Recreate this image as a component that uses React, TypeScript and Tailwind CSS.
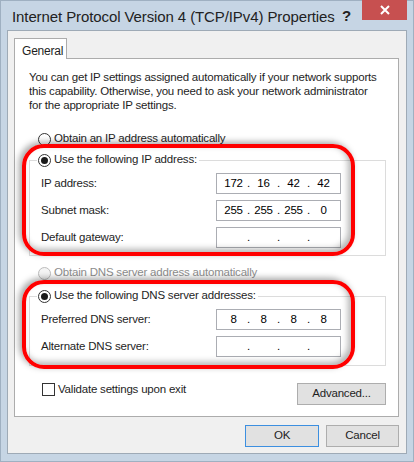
import React from 'react';

const font = "font-['Liberation_Sans',Arial,sans-serif]";

function Radio({ checked, disabled }: { checked?: boolean; disabled?: boolean }) {
  return (
    <span
      className={`w-[13px] h-[13px] rounded-full border flex items-center justify-center shrink-0 ${
        disabled ? 'border-[#bcbcbc] bg-[#f4f4f4]' : 'border-[#333333] bg-white'
      }`}
    >
      {checked && <span className="w-[7px] h-[7px] rounded-full bg-[#1a1a1a]" />}
    </span>
  );
}

function IpField({ octets }: { octets: string[] }) {
  return (
    <div className="w-[125px] h-[21px] border border-[#abadb3] bg-white flex items-center pl-[3px] text-black">
      {octets.map((o, i) => (
        <React.Fragment key={i}>
          <span className="w-[27px] text-center">{o}</span>
          {i < 3 && <span className="w-[3px] text-center">.</span>}
        </React.Fragment>
      ))}
    </div>
  );
}

function FieldRow({ label, octets }: { label: string; octets: string[] }) {
  return (
    <div className="flex items-center h-[21px]">
      <span className="w-[175px]">{label}</span>
      <IpField octets={octets} />
    </div>
  );
}

function Button({ children, primary }: { children: React.ReactNode; primary?: boolean }) {
  return (
    <div
      className={`h-[22px] flex items-center justify-center bg-[#e1e1e1] border ${
        primary ? 'border-[#3c8fe0] w-[74px]' : 'border-[#adadad] w-[73px]'
      }`}
    >
      {children}
    </div>
  );
}

export default function App() {
  return (
    <div className={`w-[414px] h-[462px] bg-[#c6d5e4] border border-[#9fb0c1] flex flex-col text-[11.5px] tracking-[-0.2px] text-[#1e1e1e] ${font}`}>
      {/* Title bar */}
      <div className="h-[29px] flex items-start">
        <div className="pl-[11px] pt-[5px] text-[15px] tracking-[-0.1px] text-[#222] whitespace-nowrap">
          Internet Protocol Version 4 (TCP/IPv4) Properties
        </div>
        <div className="ml-auto flex items-start">
          <div className="pt-[4px] pr-[11px] text-[15px] font-bold text-[#222]">?</div>
          <div className="w-[45px] h-[20px] bg-[#c75050] flex items-center justify-center mr-[6px] -mt-px">
            <svg width="10" height="10" viewBox="0 0 10 10">
              <path d="M1 1L9 9M9 1L1 9" stroke="white" strokeWidth="2" />
            </svg>
          </div>
        </div>
      </div>

      {/* Client area */}
      <div className="ml-[6px] w-[400px] h-[424px] border border-[#9eaab6] bg-[#f0f0f0] pl-[6px] pt-[7px]">
        {/* Tab */}
        <div className="relative z-10 -mb-px w-[53px] h-[21px] border border-b-0 border-[#acacac] bg-white pl-[7px] pt-[3px] text-[12px]">
          General
        </div>

        {/* Tab panel */}
        <div className="relative w-[385px] h-[359px] border border-[#acacac] bg-white px-[14px] pt-[11px]">
          <p className="leading-[14px] whitespace-nowrap">
            You can get IP settings assigned automatically if your network supports
            <br />
            this capability. Otherwise, you need to ask your network administrator
            <br />
            for the appropriate IP settings.
          </p>

          <div className="mt-[19px] h-[16px] flex items-center gap-[3px] pl-[9px]">
            <Radio />
            <span>Obtain an IP address automatically</span>
          </div>

          <fieldset className="mt-[6px] w-[357px] border border-[#dcdcdc] pt-[6px] pb-[7px]">
            <legend className="ml-[7px] h-[14px] flex items-center gap-[3px] pr-[2px] pl-[1px]">
              <Radio checked />
              <span>Use the following IP address:</span>
            </legend>
            <div className="flex flex-col gap-[6px] pl-[11px]">
              <FieldRow label="IP address:" octets={['172', '16', '42', '42']} />
              <FieldRow label="Subnet mask:" octets={['255', '255', '255', '0']} />
              <FieldRow label="Default gateway:" octets={['', '', '', '']} />
            </div>
          </fieldset>

          <div className="mt-[9px] h-[16px] flex items-center gap-[3px] pl-[9px] text-[#8d8d8d]">
            <Radio disabled />
            <span>Obtain DNS server address automatically</span>
          </div>

          <fieldset className="mt-[8px] w-[357px] border border-[#dcdcdc] pt-[6px] pb-[8px]">
            <legend className="ml-[7px] h-[14px] flex items-center gap-[3px] pr-[2px] pl-[1px]">
              <Radio checked />
              <span>Use the following DNS server addresses:</span>
            </legend>
            <div className="flex flex-col gap-[6px] pl-[11px]">
              <FieldRow label="Preferred DNS server:" octets={['8', '8', '8', '8']} />
              <FieldRow label="Alternate DNS server:" octets={['', '', '', '']} />
            </div>
          </fieldset>

          <div className="mt-[17px] flex items-start w-[357px]">
            <div className="flex items-center gap-[3px] pl-[13px] h-[13px]">
              <span className="w-[13px] h-[13px] border border-[#333333] bg-white shrink-0" />
              <span>Validate settings upon exit</span>
            </div>
            <div className="ml-auto">
              <div className="w-[89px] h-[22px] flex items-center justify-center bg-[#e1e1e1] border border-[#adadad]">
                Advanced...
              </div>
            </div>
          </div>

          {/* Annotation rings */}
          <div className="absolute left-[7px] top-[85px] w-[333px] h-[112px] rounded-[22px] border-[4px] border-[#ff0000] shadow-[-3px_-2px_6px_rgba(0,0,0,0.35),inset_-3px_-3px_6px_rgba(0,0,0,0.3)] pointer-events-none" />
          <div className="absolute left-[7px] top-[221px] w-[333px] h-[89px] rounded-[22px] border-[4px] border-[#ff0000] shadow-[-3px_-2px_6px_rgba(0,0,0,0.35),inset_-3px_-3px_6px_rgba(0,0,0,0.3)] pointer-events-none" />
        </div>

        {/* Dialog buttons */}
        <div className="w-[385px] mt-[8px] flex justify-end gap-[7px]">
          <Button primary>OK</Button>
          <Button>Cancel</Button>
        </div>
      </div>
    </div>
  );
}
